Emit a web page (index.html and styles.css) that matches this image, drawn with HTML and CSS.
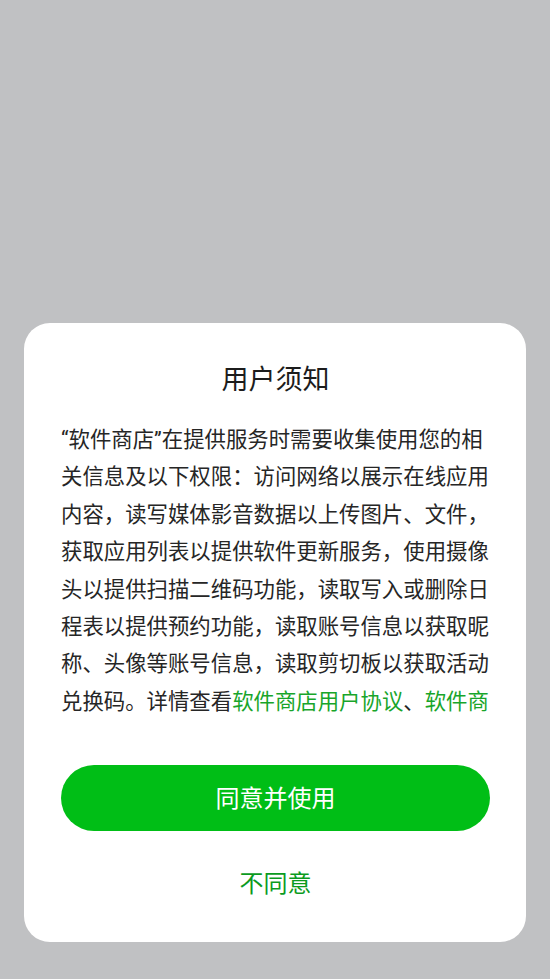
FILE: index.html
```html
<!DOCTYPE html>
<html lang="zh-CN">
<head>
<meta charset="utf-8">
<title>用户须知</title>
<link rel="stylesheet" href="styles.css">
</head>
<body>
<div class="screen">
  <div class="dialog">
    <h1 class="title">用户须知</h1>
    <div class="content">
      <p class="text">“软件商店”在提供服务时需要收集使用您的相关信息及以下权限：访问网络以展示在线应用内容，读写媒体影音数据以上传图片、文件，获取应用列表以提供软件更新服务，使用摄像头以提供扫描二维码功能，读取写入或删除日程表以提供预约功能，读取账号信息以获取昵称、头像等账号信息，读取剪切板以获取活动兑换码。详情查看<a class="link">软件商店用户协议</a>、<a class="link">软件商</a></p>
    </div>
    <button class="btn-agree">同意并使用</button>
    <button class="btn-disagree">不同意</button>
  </div>
</div>
</body>
</html>
```

FILE: styles.css
```css
html, body {
  margin: 0;
  padding: 0;
  height: 100%;
}
body {
  background: #c0c1c3;
  font-family: Roboto, "Noto Sans CJK SC", sans-serif;
}
.screen {
  height: 100%;
  display: flex;
  flex-direction: column;
  justify-content: flex-end;
  padding: 0 24px 37px 24px;
  box-sizing: border-box;
}
.dialog {
  background: #ffffff;
  border-radius: 26px;
  padding: 39px 36px 42px 37px;
  display: flex;
  flex-direction: column;
  align-items: stretch;
}
.title {
  margin: 0;
  font-size: 27px;
  line-height: 36px;
  font-weight: 400;
  color: #1c1c1c;
  text-align: center;
}
.content {
  margin-top: 23px;
  height: 299px;
  overflow: hidden;
}
.text {
  margin: 0;
  font-size: 21.4px;
  line-height: 37.4px;
  color: #262626;
}
.link {
  color: #18a52a;
  text-decoration: none;
}
.btn-agree {
  margin-top: 45px;
  height: 66px;
  border: none;
  border-radius: 33px;
  background: #00be16;
  color: #ffffff;
  font-family: "Noto Sans CJK SC", sans-serif;
  font-size: 24px;
  line-height: 1;
  padding: 0 0 3px 0;
}
.btn-disagree {
  margin-top: 33px;
  height: 36px;
  border: none;
  background: transparent;
  color: #0b9b1e;
  font-family: "Noto Sans CJK SC", sans-serif;
  font-size: 24px;
  line-height: 1;
  padding: 0;
}
```
